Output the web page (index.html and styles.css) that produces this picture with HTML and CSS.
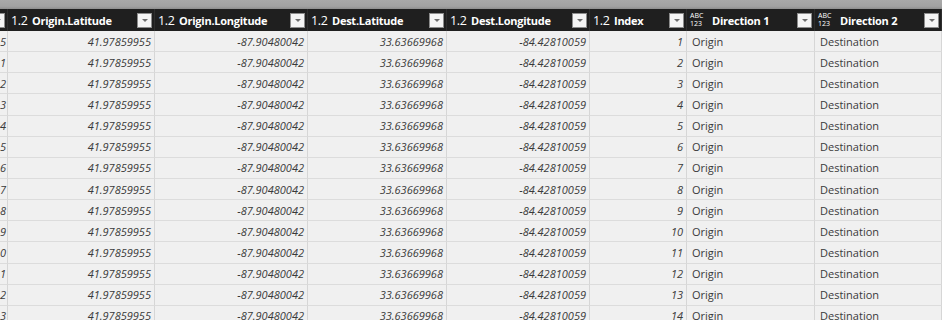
FILE: index.html
```html
<!DOCTYPE html>
<html>
<head>
<meta charset="utf-8">
<link rel="stylesheet" href="styles.css">
</head>
<body>
<div class="topbar"></div>
<div class="grid">
  <div class="row head">
    <div class="hc stub"><span class="dd"></span></div>
    <div class="hc"><span class="t12">1.2</span><span class="name">Origin.Latitude</span><span class="dd"></span></div>
    <div class="hc"><span class="t12">1.2</span><span class="name">Origin.Longitude</span><span class="dd"></span></div>
    <div class="hc"><span class="t12">1.2</span><span class="name">Dest.Latitude</span><span class="dd"></span></div>
    <div class="hc"><span class="t12">1.2</span><span class="name">Dest.Longitude</span><span class="dd"></span></div>
    <div class="hc"><span class="t12">1.2</span><span class="name">Index</span><span class="dd"></span></div>
    <div class="hc"><span class="abc"><span>ABC</span><span>123</span></span><span class="name">Direction 1</span><span class="dd"></span></div>
    <div class="hc"><span class="abc"><span>ABC</span><span>123</span></span><span class="name">Direction 2</span><span class="dd"></span></div>
  </div>
  <div id="body"></div>
</div>
<script>
(function(){
  var stubs = ['5','1','2','3','4','5','6','7','8','9','0','1','2','3'];
  var html = '';
  for (var i = 0; i < 14; i++) {
    html += '<div class="row">' +
      '<div class="c stub num">' + stubs[i] + '</div>' +
      '<div class="c num">41.97859955</div>' +
      '<div class="c num">-87.90480042</div>' +
      '<div class="c num">33.63669968</div>' +
      '<div class="c num">-84.42810059</div>' +
      '<div class="c num">' + (i + 1) + '</div>' +
      '<div class="c txt">Origin</div>' +
      '<div class="c txt">Destination</div>' +
      '</div>';
  }
  document.getElementById('body').innerHTML = html;
})();
</script>
</body>
</html>
```
FILE: styles.css
```css
html, body {
  margin: 0;
  padding: 0;
  width: 942px;
  height: 320px;
  overflow: hidden;
  background: #f0f0f0;
  font-family: "Open Sans", "Noto Sans", sans-serif;
}
.topbar {
  height: 9px;
  background: linear-gradient(#a9a9a9, #a2a2a2 70%, #8e8e8e);
}
.grid {
  width: 942px;
  overflow: hidden;
}
.row {
  display: grid;
  grid-template-columns: 8px 147px 153px 139px 143px 97px 128px 127px;
  height: 21.15px;
  box-sizing: border-box;
}
.row.head {
  height: 22px;
  background: #1f1f1f;
}
.hc {
  display: flex;
  align-items: center;
  color: #fff;
  padding-left: 3px;
  padding-right: 3px;
  overflow: hidden;
  white-space: nowrap;
  box-shadow: inset -1px 0 0 #2e2e2e;
}
.hc.stub {
  padding: 0 3px 0 0;
  justify-content: flex-end;
}
.t12 {
  font-size: 12.5px;
  width: 21px;
  flex: none;
  letter-spacing: -0.3px;
}
.abc {
  width: 22px;
  flex: none;
  display: flex;
  flex-direction: column;
  font-size: 7px;
  line-height: 8px;
}
.name {
  font-weight: 700;
  font-size: 11px;
  letter-spacing: -0.25px;
  flex: 1;
  overflow: hidden;
}
.dd {
  flex: none;
  width: 13px;
  height: 13px;
  border: 1px solid #8c8c8c;
  background: #f4f4f4;
  position: relative;
}
.dd::after {
  content: "";
  position: absolute;
  left: 4px;
  top: 5px;
  border-left: 3px solid transparent;
  border-right: 3px solid transparent;
  border-top: 3px solid #6e6e6e;
}
.c {
  border-right: 1px solid #d6d6d6;
  border-bottom: 1px solid #dcdcdc;
  font-size: 11px;
  color: #3a3a3a;
  display: flex;
  align-items: center;
  white-space: nowrap;
  overflow: hidden;
}
.num {
  font-style: italic;
  justify-content: flex-end;
  padding-right: 3px;
}
.c.stub {
  padding-right: 1px;
}
.txt {
  padding-left: 5px;
}
```
